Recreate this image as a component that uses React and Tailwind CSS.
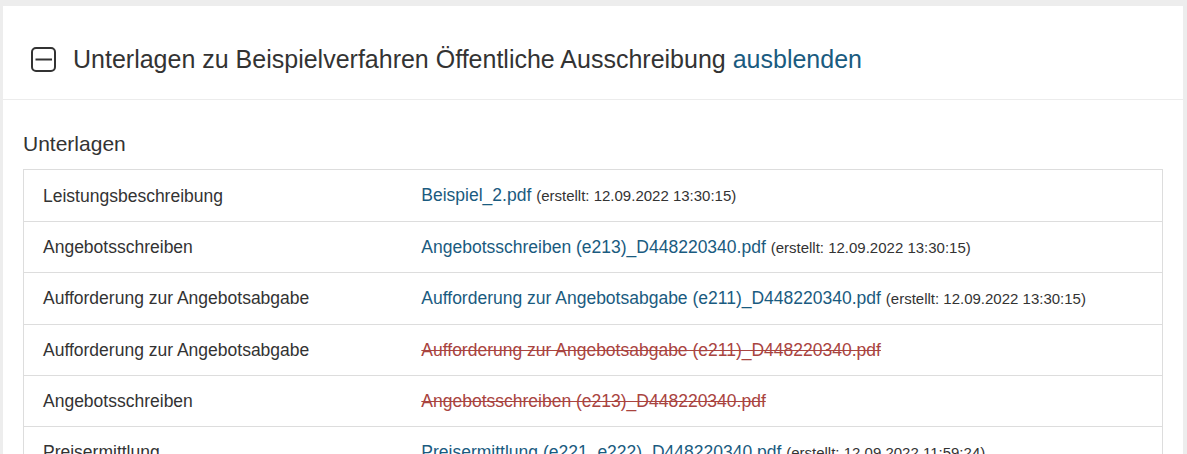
import React from 'react';

const documents = [
  {
    label: 'Leistungsbeschreibung',
    file: 'Beispiel_2.pdf',
    created: '12.09.2022 13:30:15'
  },
  {
    label: 'Angebotsschreiben',
    file: 'Angebotsschreiben (e213)_D448220340.pdf',
    created: '12.09.2022 13:30:15'
  },
  {
    label: 'Aufforderung zur Angebotsabgabe',
    file: 'Aufforderung zur Angebotsabgabe (e211)_D448220340.pdf',
    created: '12.09.2022 13:30:15'
  },
  {
    label: 'Aufforderung zur Angebotsabgabe',
    file: 'Aufforderung zur Angebotsabgabe (e211)_D448220340.pdf',
    deleted: true
  },
  {
    label: 'Angebotsschreiben',
    file: 'Angebotsschreiben (e213)_D448220340.pdf',
    deleted: true
  },
  {
    label: 'Preisermittlung',
    file: 'Preisermittlung (e221_e222)_D448220340.pdf',
    created: '12.09.2022 11:59:24'
  },
  {
    label: 'Vertragsbedingungen',
    file: 'Vertragsbedingungen (e214)_D448220340.pdf',
    created: '12.09.2022 11:59:24'
  }
];

const CollapseIcon = () => (
  <svg width="25" height="25" viewBox="0 0 25 25" fill="none" className="shrink-0">
    <rect x="1" y="1" width="23" height="23" rx="4" stroke="#333333" strokeWidth="2" />
    <line x1="4.5" y1="12.5" x2="21" y2="12.5" stroke="#333333" strokeWidth="2" />
  </svg>
);

const App = () => {
  return (
    <div
      className="min-h-[454px] bg-[#ededed] pt-[6px] pl-[3px] pr-[4px] text-[#333333]"
      style={{ fontFamily: '"Liberation Sans", Arial, sans-serif' }}
    >
      <div className="bg-white">
        {/* Header */}
        <div className="flex items-center gap-[17px] border-b border-[#ececec] pl-[28px] pt-[35px] pb-[21px]">
          <CollapseIcon />
          <h1 className="text-[25px] leading-[37px]">
            Unterlagen zu Beispielverfahren Öffentliche Ausschreibung{' '}
            <a href="#" className="text-[#1a5b80]">ausblenden</a>
          </h1>
        </div>

        {/* Documents */}
        <div className="px-[20px] pt-[29px] pb-6">
          <h2 className="mb-[10px] text-[21px] leading-[30px]">Unterlagen</h2>
          <div className="border border-[#dddddd]">
            {documents.map((doc, i) => (
              <div
                key={i}
                className={`flex h-[51.2px] items-center text-[17.5px] leading-[24px] ${i > 0 ? 'border-t border-[#dddddd]' : ''}`}
              >
                <div className="w-1/3 shrink-0 px-[19px]">{doc.label}</div>
                <div className="flex-1 px-[18px]">
                  {doc.deleted ? (
                    <span className="text-[#a9443f] line-through">{doc.file}</span>
                  ) : (
                    <>
                      <a href="#" className="text-[#1a5b80]">{doc.file}</a>{' '}
                      <span className="text-[15px]">(erstellt: {doc.created})</span>
                    </>
                  )}
                </div>
              </div>
            ))}
          </div>
        </div>
      </div>
    </div>
  );
};

export default App;
